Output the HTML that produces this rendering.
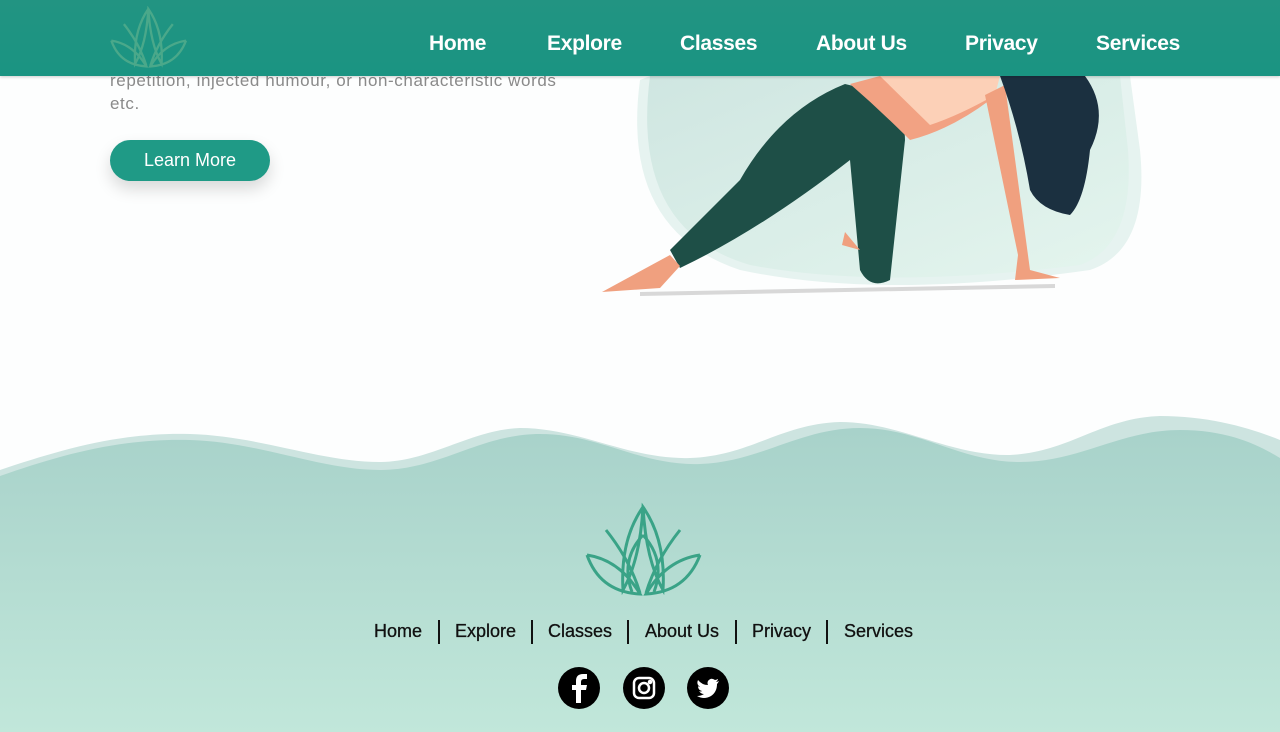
<!DOCTYPE html>
<html><head><meta charset="utf-8"><style>
*{margin:0;padding:0;box-sizing:border-box}
body{width:1280px;height:732px;overflow:hidden;background:#fdfefe;font-family:"Liberation Sans",sans-serif;position:relative}
.hdr{position:absolute;left:0;top:0;width:1280px;height:76px;background:linear-gradient(#229482,#1a9482);z-index:5;box-shadow:0 1px 3px rgba(0,0,0,.2)}
.nav a{position:absolute;top:32px;color:#fff;font-weight:bold;font-size:21px;text-decoration:none;letter-spacing:-0.3px}
.txt{position:absolute;left:110px;top:69px;color:#8a8a8a;font-size:17px;line-height:23px;letter-spacing:0.6px}
.btn{position:absolute;left:110px;top:140px;width:160px;height:41px;border-radius:21px;background:#1f9a86;color:#fff;font-size:18px;text-align:center;line-height:41px;box-shadow:0 8px 16px rgba(0,0,0,.15)}
.fnav{position:absolute;top:621px;left:0;width:1280px;text-align:center;font-size:18px;color:#111;-webkit-text-stroke:0.3px #111}
.fnav span{position:absolute;top:0}
.sep{position:absolute;top:620px;width:2px;height:24px;background:#111}
.soc{position:absolute;top:667px;width:42px;height:42px;border-radius:50%;background:#000}
</style></head><body>
<svg style="position:absolute;left:0;top:0" width="1280" height="732">
<defs><linearGradient id="fg" x1="0" y1="0" x2="0" y2="1"><stop offset="0" stop-color="#a8d2ca"/><stop offset="1" stop-color="#c1e7da"/></linearGradient>
<linearGradient id="bl" x1="0" y1="0" x2="1" y2="1"><stop offset="0" stop-color="#cfe6e1"/><stop offset="1" stop-color="#e4f5ee"/></linearGradient></defs>
<path d="M640 80 Q 620 230 740 270 Q 880 300 1090 270 Q 1150 250 1140 150 L1130 76 L650 76 Z" fill="#e6f3f0"/>
<path d="M650 76 Q 630 230 750 265 Q 880 290 1080 265 Q 1135 245 1128 150 L1120 76 Z" fill="url(#bl)"/>
<path d="M640 292 L1055 284 L1055 288 L640 296Z" fill="#d8d8d8"/>
<path d="M845 84 Q 780 110 740 180 L670 250 L680 268 Q 760 230 850 160 L860 270 Q 870 290 890 280 L905 140 Q 905 110 870 90 Z" fill="#1e4f47"/>
<path d="M670 255 L602 292 L660 288 L680 266 Z" fill="#f0a07f"/>
<path d="M845 232 L860 250 L842 245Z" fill="#f0a07f"/>
<path d="M850 84 L880 76 L1000 76 L990 100 Q 950 130 910 140 Q 880 110 850 84Z" fill="#f2a283"/>
<path d="M880 76 L1000 76 L995 95 Q 960 115 930 125 Z" fill="#fcd0b7"/>
<path d="M985 95 L1005 85 L1030 270 L1060 278 L1015 280 L1018 255 Z" fill="#f0a07f"/>
<path d="M1000 76 L1085 76 Q 1110 110 1090 150 Q 1085 200 1070 215 Q 1040 210 1030 190 Q 1020 130 1000 76Z" fill="#1b3040"/>
<path d="M0 470 C 60 450 120 432 190 434 C 260 436 320 462 380 462 C 430 462 470 430 520 428 C 580 428 630 460 690 458 C 750 456 780 424 840 422 C 900 422 950 456 1010 455 C 1070 452 1100 418 1160 416 C 1210 416 1250 428 1280 440 L1280 732 L0 732Z" fill="#cde4e0"/>
<path d="M0 476 C 60 455 120 438 190 440 C 260 442 320 470 380 470 C 440 470 480 434 540 434 C 600 434 640 466 700 464 C 760 462 800 428 860 428 C 920 428 960 462 1020 462 C 1080 462 1120 430 1180 430 C 1230 430 1260 446 1280 458 L1280 732 L0 732Z" fill="url(#fg)"/>
<g fill="none" stroke="#3aa387" stroke-width="3">
<path d="M643 507 Q 620 540 623 590 Q 640 560 643 507 Q 666 540 663 590 Q 646 560 643 507"/>
<path d="M643 535 Q 620 560 632 592 M643 535 Q 666 560 654 592"/>
<path d="M606 530 Q 630 560 640 593 M680 530 Q 656 560 646 593"/>
<path d="M587 555 Q 620 560 640 594 Q 600 592 587 555 M700 555 Q 666 560 646 594 Q 686 592 700 555"/>
</g>
</svg>
<div class="hdr">
<svg style="position:absolute;left:110px;top:6px" width="78" height="64" viewBox="585 505 118 92"><g fill="none" stroke="#4aa88a" stroke-width="3.5">
<path d="M643 507 Q 620 540 623 590 Q 640 560 643 507 Q 666 540 663 590 Q 646 560 643 507"/>
<path d="M606 530 Q 630 560 640 593 M680 530 Q 656 560 646 593"/>
<path d="M587 555 Q 620 560 640 594 Q 600 592 587 555 M700 555 Q 666 560 646 594 Q 686 592 700 555"/></g></svg>
<div class="nav"><a style="left:429px">Home</a><a style="left:547px">Explore</a><a style="left:680px">Classes</a><a style="left:816px">About Us</a><a style="left:965px">Privacy</a><a style="left:1096px">Services</a></div>
</div>
<div class="txt">repetition, injected humour, or non-characteristic words<br>etc.</div>
<div class="btn">Learn More</div>
<div class="fnav"><span style="left:374px">Home</span><span style="left:455px">Explore</span><span style="left:548px">Classes</span><span style="left:645px">About Us</span><span style="left:752px">Privacy</span><span style="left:844px">Services</span></div>
<div class="sep" style="left:438px"></div><div class="sep" style="left:531px"></div><div class="sep" style="left:627px"></div><div class="sep" style="left:735px"></div><div class="sep" style="left:826px"></div>
<div class="soc" style="left:558px"><svg width="42" height="42"><path d="M23 36 V23 H28 L29 18 H23 V15 Q23 12 26 12 H29 V7 H25 Q18 7 18 14 V18 H14 V23 H18 V36Z" fill="#fff"/></svg></div>
<div class="soc" style="left:623px"><svg width="42" height="42" fill="none" stroke="#fff" stroke-width="2.5"><rect x="11" y="11" width="20" height="20" rx="5"/><circle cx="21" cy="21" r="5"/><circle cx="27" cy="15" r="1" fill="#fff"/></svg></div>
<div class="soc" style="left:687px"><svg width="42" height="42"><path d="M32 14 Q30 15 29 15 Q31 13 31 12 Q29 13 28 13 Q24 10 21 14 Q20 16 21 18 Q15 18 11 13 Q9 17 13 20 Q12 20 11 19 Q11 23 15 24 Q14 25 12 24 Q14 27 17 27 Q14 29 10 29 Q17 33 24 29 Q30 25 30 17 Q31 16 32 14Z" fill="#fff"/></svg></div>
</body></html>
